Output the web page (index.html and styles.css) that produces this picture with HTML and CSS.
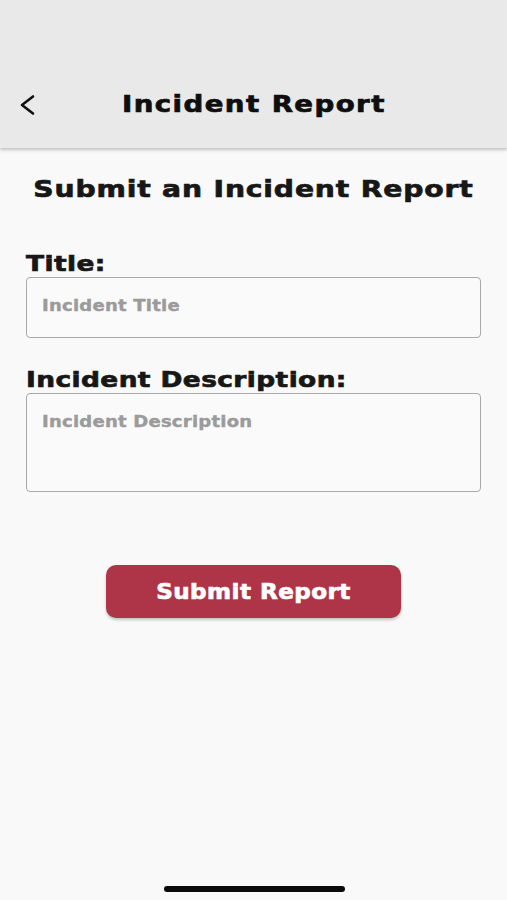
FILE: index.html
```html
<!DOCTYPE html>
<html>
<head>
<meta charset="utf-8">
<link rel="stylesheet" href="styles.css">
</head>
<body>
<div class="screen">
  <header class="topbar">
    <div class="navrow">
      <span class="back">
        <svg width="18" height="22" viewBox="0 0 18 22"><path d="M15 2.5 L4 11 L15 19.5" fill="none" stroke="#111" stroke-width="2.6" stroke-linecap="round" stroke-linejoin="round"/></svg>
      </span>
      <h1 class="navtitle"><span class="wide">Incident Report</span></h1>
    </div>
  </header>
  <main class="content">
    <h2 class="heading"><span class="wide">Submit an Incident Report</span></h2>
    <label class="label first"><span class="wide left">Title:</span></label>
    <div class="field"><span class="ph wide left">Incident Title</span></div>
    <label class="label second"><span class="wide left">Incident Description:</span></label>
    <div class="field area"><span class="ph wide left">Incident Description</span></div>
    <div class="btnrow"><button class="submit"><span class="wide btnlabel">Submit Report</span></button></div>
  </main>
  <div class="home"></div>
</div>
</body>
</html>
```
FILE: styles.css
```css
* { box-sizing: border-box; }
html, body { margin: 0; padding: 0; }
body { background: #f9f9f9; font-family: "DejaVu Sans", sans-serif; font-weight: bold; color: #171717; }
.screen { width: 507px; height: 900px; position: relative; display: flex; flex-direction: column; }
.wide { display: inline-block; transform: scaleX(1.2); transform-origin: center; -webkit-text-stroke: 0.7px currentColor; white-space: nowrap; }
.wide.left { transform-origin: left center; }
.topbar { height: 148px; background: #e9e9e9; box-shadow: 0 2px 3px rgba(0,0,0,0.22); padding-top: 89px; position: relative; z-index: 1; }
.navrow { position: relative; height: 30px; display: flex; justify-content: center; }
.back { position: absolute; left: 18px; top: 5px; display: flex; }
.navtitle { margin: 0; font-size: 23px; line-height: 30px; letter-spacing: 1.2px; color: #0e0e0e; }
.content { padding: 0 26px; display: flex; flex-direction: column; }
.heading { margin: 26px 0 0; text-align: center; font-size: 23.5px; line-height: 30px; letter-spacing: 0.7px; }
.label { display: block; font-size: 22px; line-height: 27px; letter-spacing: 0.35px; }
.label.first { margin-top: 46px; }
.label.second { margin-top: 28px; }
.field { height: 61px; border: 1.5px solid #a9a9a9; border-radius: 4px; padding: 18px 15px 0; background: #fafafa; line-height: 20px; }
.field.area { height: 99px; }
.ph { color: #9b9b9b; font-size: 15px; letter-spacing: 0.2px; -webkit-text-stroke: 0.4px currentColor; }
.btnrow { display: flex; justify-content: center; margin-top: 73px; }
.submit { width: 295px; height: 53px; border: none; border-radius: 10px; background: #ae3447; color: #fff; font-family: inherit; font-weight: bold; font-size: 21px; letter-spacing: 0.4px; box-shadow: 0 2px 3px rgba(0,0,0,0.22); padding: 0; }
.btnlabel { transform: scaleX(1.1); }
.home { position: absolute; left: 164px; top: 886px; width: 181px; height: 6px; border-radius: 3px; background: #0a0a0a; }
```
